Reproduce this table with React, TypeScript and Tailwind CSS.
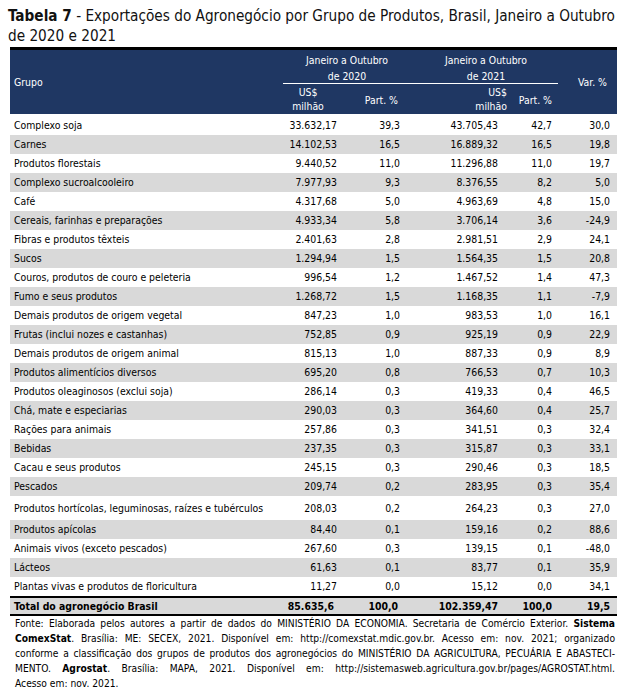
import React from "react";

const rows: string[][] = [
  ["Complexo soja", "33.632,17", "39,3", "43.705,43", "42,7", "30,0"],
  ["Carnes", "14.102,53", "16,5", "16.889,32", "16,5", "19,8"],
  ["Produtos florestais", "9.440,52", "11,0", "11.296,88", "11,0", "19,7"],
  ["Complexo sucroalcooleiro", "7.977,93", "9,3", "8.376,55", "8,2", "5,0"],
  ["Café", "4.317,68", "5,0", "4.963,69", "4,8", "15,0"],
  ["Cereais, farinhas e preparações", "4.933,34", "5,8", "3.706,14", "3,6", "-24,9"],
  ["Fibras e produtos têxteis", "2.401,63", "2,8", "2.981,51", "2,9", "24,1"],
  ["Sucos", "1.294,94", "1,5", "1.564,35", "1,5", "20,8"],
  ["Couros, produtos de couro e peleteria", "996,54", "1,2", "1.467,52", "1,4", "47,3"],
  ["Fumo e seus produtos", "1.268,72", "1,5", "1.168,35", "1,1", "-7,9"],
  ["Demais produtos de origem vegetal", "847,23", "1,0", "983,53", "1,0", "16,1"],
  ["Frutas (inclui nozes e castanhas)", "752,85", "0,9", "925,19", "0,9", "22,9"],
  ["Demais produtos de origem animal", "815,13", "1,0", "887,33", "0,9", "8,9"],
  ["Produtos alimentícios diversos", "695,20", "0,8", "766,53", "0,7", "10,3"],
  ["Produtos oleaginosos (exclui soja)", "286,14", "0,3", "419,33", "0,4", "46,5"],
  ["Chá, mate e especiarias", "290,03", "0,3", "364,60", "0,4", "25,7"],
  ["Rações para animais", "257,86", "0,3", "341,51", "0,3", "32,4"],
  ["Bebidas", "237,35", "0,3", "315,87", "0,3", "33,1"],
  ["Cacau e seus produtos", "245,15", "0,3", "290,46", "0,3", "18,5"],
  ["Pescados", "209,74", "0,2", "283,95", "0,3", "35,4"],
  ["Produtos hortícolas, leguminosas, raízes e tubérculos", "208,03", "0,2", "264,23", "0,3", "27,0"],
  ["Produtos apícolas", "84,40", "0,1", "159,16", "0,2", "88,6"],
  ["Animais vivos (exceto pescados)", "267,60", "0,3", "139,15", "0,1", "-48,0"],
  ["Lácteos", "61,63", "0,1", "83,77", "0,1", "35,9"],
  ["Plantas vivas e produtos de floricultura", "11,27", "0,0", "15,12", "0,0", "34,1"],
];

const font = { fontFamily: "'DejaVu Sans Condensed', 'DejaVu Sans', sans-serif" };

function Row({ r, i }: { r: string[]; i: number }) {
  const tall = i === 20;
  return (
    <div
      className={`grid grid-cols-[270px_58px_64px_98px_54px_63px] items-center ${
        tall ? "h-[24px]" : "h-[19px]"
      } ${i % 2 === 1 ? "bg-[#d9d9d9]" : "bg-white"}`}
    >
      <div className="pl-[4px] whitespace-nowrap">{r[0]}</div>
      <div className="text-right pr-[1px]">{r[1]}</div>
      <div className="text-right pr-[2px]">{r[2]}</div>
      <div className="text-right pr-[2px]">{r[3]}</div>
      <div className="text-right pr-[2px]">{r[4]}</div>
      <div className="text-right pr-[7px]">{r[5]}</div>
    </div>
  );
}

const lineCls = "whitespace-nowrap text-justify [text-align-last:justify]";

export default function App() {
  return (
    <div className="w-[630px] h-[690px] bg-white text-black overflow-hidden" style={font}>
      <div className="pl-[8px] pt-[6px] text-[15.2px] leading-[20px] text-[#111] whitespace-nowrap">
        <span className="font-bold">Tabela 7</span> - Exportações do Agronegócio por Grupo de Produtos, Brasil, Janeiro a Outubro
        <br />
        de 2020 e 2021
      </div>
      <div className="ml-[10px] w-[607px] mt-[1px] text-[10.4px] leading-[15px]">
        <div className="border-t-[3px] border-black bg-[#1f3763] text-white h-[67px] flex">
          <div className="w-[270px] flex items-center pl-[4px] pt-[1px]">Grupo</div>
          <div className="w-[132px] flex flex-col">
            <div className="text-center pt-[2px] leading-[16px] pl-[2px]">
              Janeiro a Outubro
              <br />
              de 2020
            </div>
            <div className="h-[1px] bg-white ml-[3px] mr-[-5px] mt-[-1px]" />
            <div className="flex items-center flex-1">
              <div className="w-[56px] text-center leading-[14px]">
                US$
                <br />
                milhão
              </div>
              <div className="flex-1 text-right pr-[14px] pt-[2px]">Part. %</div>
            </div>
          </div>
          <div className="w-[148px] flex flex-col">
            <div className="text-center pt-[2px] leading-[16px]">
              Janeiro a Outubro
              <br />
              de 2021
            </div>
            <div className="h-[1px] bg-white ml-[5px] mr-[2px] mt-[-1px]" />
            <div className="flex items-center flex-1">
              <div className="w-[95px] text-right leading-[14px]">
                US$
                <br />
                milhão
              </div>
              <div className="flex-1 text-right pr-[8px] pt-[2px]">Part. %</div>
            </div>
          </div>
          <div className="flex-1 flex items-center justify-center pl-[8px]">Var. %</div>
        </div>
        <div className="h-[2px]" />
        {rows.map((r, i) => (
          <Row key={i} r={r} i={i} />
        ))}
        <div className="border-t-2 border-b-2 border-black bg-[#d9d9d9] font-bold grid grid-cols-[270px_58px_64px_98px_54px_63px] items-center h-[20px]">
          <div className="pl-[4px]">Total do agronegócio Brasil</div>
          <div className="text-right pr-[4px]">85.635,6</div>
          <div className="text-right pr-[4px]">100,0</div>
          <div className="text-right pr-[2px]">102.359,47</div>
          <div className="text-right pr-[2px]">100,0</div>
          <div className="text-right pr-[7px]">19,5</div>
        </div>
      </div>
      <div className="ml-[15px] w-[600px] text-[10.2px] leading-[15px]">
        <div className={lineCls}>
          Fonte: Elaborada pelos autores a partir de dados do MINISTÉRIO DA ECONOMIA. Secretaria de Comércio Exterior.{" "}
          <span className="font-bold">Sistema</span>
        </div>
        <div className={lineCls}>
          <span className="font-bold">ComexStat</span>. Brasília: ME: SECEX, 2021. Disponível em: http://comexstat.mdic.gov.br. Acesso em: nov. 2021; organizado
        </div>
        <div className={lineCls}>
          conforme a classificação dos grupos de produtos dos agronegócios do MINISTÉRIO DA AGRICULTURA, PECUÁRIA E ABASTECI-
        </div>
        <div className={lineCls}>
          MENTO. <span className="font-bold">Agrostat</span>. Brasília: MAPA, 2021. Disponível em: http://sistemasweb.agricultura.gov.br/pages/AGROSTAT.html.
        </div>
        <div className="whitespace-nowrap">Acesso em: nov. 2021.</div>
      </div>
    </div>
  );
}
